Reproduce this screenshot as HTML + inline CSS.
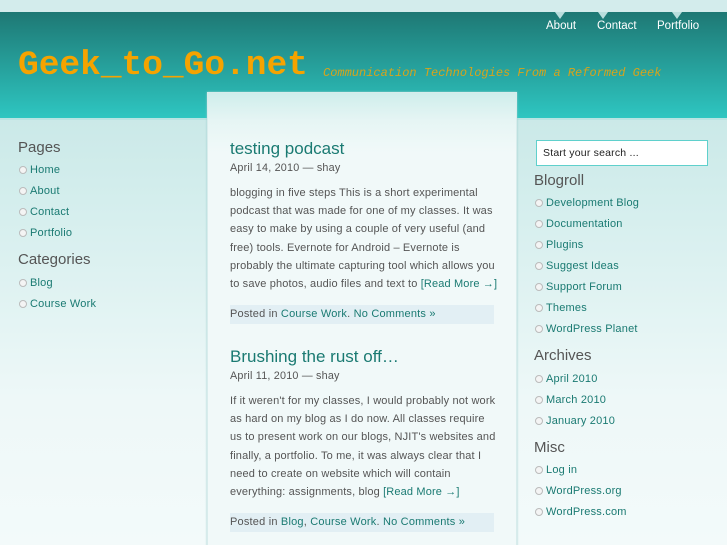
<!DOCTYPE html>
<html><head><style>
*{margin:0;padding:0;box-sizing:border-box}
html{width:727px;height:545px;overflow:hidden}
body{width:727px;height:545px;overflow:hidden;font-family:"Liberation Sans",sans-serif;background:linear-gradient(#cbe9e8 120px,#d4eeed 200px,#eef8f8 400px,#f3fafa);position:relative;font-size:11px;color:#555;letter-spacing:0.2px}
a{color:#1a7a72;text-decoration:none}
#top{position:absolute;left:0;top:0;width:727px;height:12px;background:#d3ecec}
#head{position:absolute;left:0;top:12px;width:727px;height:108px;background:linear-gradient(#1e7874,#2ec6c1);border-bottom:2px solid #b8e4e2}
#nav a{position:absolute;top:20px;color:#fff;font-size:11.5px;letter-spacing:0}
.tri{position:absolute;top:12px;width:0;height:0;border-left:5px solid transparent;border-right:5px solid transparent;border-top:7px solid #b9dedd}
#title{position:absolute;left:18px;top:46px;font-family:"Liberation Mono",monospace;font-weight:bold;font-size:34.5px;color:#f5a300;letter-spacing:0;line-height:40px}
#tag{position:absolute;left:323px;top:66px;font-family:"Liberation Mono",monospace;font-style:italic;font-size:12px;color:#d6a41c;letter-spacing:0}
#post{position:absolute;left:207px;top:92px;width:310px;height:460px;background:linear-gradient(#cfeeec,#e6f5f4 28px,#f1f9f9 60px);border:1px solid #d8ecec;box-shadow:0 0 2px #9cc}
.pt{position:absolute;left:230px;font-size:17px;color:#1a7a72;letter-spacing:0}
.meta{position:absolute;left:230px;font-size:10.8px;color:#555}
.txt{position:absolute;left:230px;width:290px;white-space:nowrap;font-size:11px;line-height:18.2px;color:#555;letter-spacing:0.15px}
.foot{position:absolute;left:230px;width:264px;height:19px;background:#e2eff4;font-size:11px;line-height:19px}
h3{position:absolute;font-weight:normal;font-size:15px;color:#555;letter-spacing:0}
ul{list-style:none;position:absolute}
li{height:21px;font-size:11px;padding-left:11px;position:relative}
li:before{content:"";position:absolute;left:0;top:2px;width:6px;height:6px;border:1px solid #bbb;border-radius:50%;background:#f4f4f4}
#search{position:absolute;left:536px;top:140px;width:172px;height:26px;border:1px solid #5fd0cc;background:#fff;font-size:10.5px;color:#222;padding:6px 0 0 6px}
</style></head><body>
<div id="top"></div>
<div id="head"></div>
<div id="nav">
<div class="tri" style="left:555px"></div><div class="tri" style="left:598px"></div><div class="tri" style="left:672px"></div>
<a style="left:546px">About</a><a style="left:597px">Contact</a><a style="left:657px">Portfolio</a>
</div>
<div id="title">Geek_to_Go.net</div>
<div id="tag">Communication Technologies From a Reformed Geek</div>
<div id="post"></div>
<div class="pt" style="top:139px">testing podcast</div>
<div class="meta" style="top:162px">April 14, 2010 — shay</div>
<div class="txt" style="top:184px">blogging in five steps This is a short experimental<br>podcast that was made for one of my classes. It was<br>easy to make by using a couple of very useful (and<br>free) tools. Evernote for Android – Evernote is<br>probably the ultimate capturing tool which allows you<br>to save photos, audio files and text to <a>[Read More →]</a></div>
<div class="foot" style="top:305px">Posted in <a>Course Work</a>. <a>No Comments »</a></div>
<div class="pt" style="top:347px">Brushing the rust off…</div>
<div class="meta" style="top:370px">April 11, 2010 — shay</div>
<div class="txt" style="top:392px">If it weren't for my classes, I would probably not work<br>as hard on my blog as I do now. All classes require<br>us to present work on our blogs, NJIT's websites and<br>finally, a portfolio. To me, it was always clear that I<br>need to create on website which will contain<br>everything: assignments, blog <a>[Read More →]</a></div>
<div class="foot" style="top:513px">Posted in <a>Blog</a>, <a>Course Work</a>. <a>No Comments »</a></div>

<h3 style="left:18px;top:139px">Pages</h3>
<ul style="left:19px;top:164px"><li><a>Home</a></li><li><a>About</a></li><li><a>Contact</a></li><li><a>Portfolio</a></li></ul>
<h3 style="left:18px;top:251px">Categories</h3>
<ul style="left:19px;top:277px"><li><a>Blog</a></li><li><a>Course Work</a></li></ul>

<div id="search">Start your search ...</div>
<h3 style="left:534px;top:172px">Blogroll</h3>
<ul style="left:535px;top:197px"><li><a>Development Blog</a></li><li><a>Documentation</a></li><li><a>Plugins</a></li><li><a>Suggest Ideas</a></li><li><a>Support Forum</a></li><li><a>Themes</a></li><li><a>WordPress Planet</a></li></ul>
<h3 style="left:534px;top:347px">Archives</h3>
<ul style="left:535px;top:373px"><li><a>April 2010</a></li><li><a>March 2010</a></li><li><a>January 2010</a></li></ul>
<h3 style="left:534px;top:439px">Misc</h3>
<ul style="left:535px;top:464px"><li><a>Log in</a></li><li><a>WordPress.org</a></li><li><a>WordPress.com</a></li></ul>
</body></html>
